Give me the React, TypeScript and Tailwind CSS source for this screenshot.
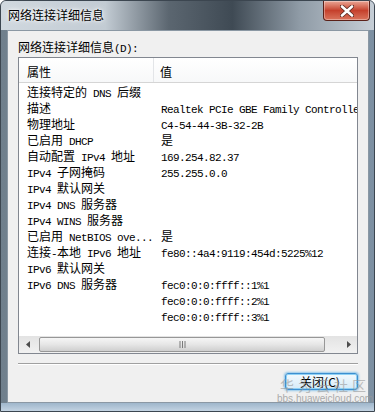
import React from "react";

const cjk = "font-['Noto_Sans_CJK_SC',sans-serif]";
const mono = "font-['Liberation_Mono','Noto_Sans_CJK_SC',monospace]";

// 中文用 12px，西文用等宽 6px 一个字
const Mixed: React.FC<{ text: string }> = ({ text }) => {
  const parts = text.split(/([\u3400-\u9fff]+)/).filter((p) => p !== "");
  return (
    <>
      {parts.map((p, i) =>
        /[\u3400-\u9fff]/.test(p) ? (
          <span key={i} className="text-[12px] leading-[16px]">
            {p}
          </span>
        ) : (
          <span key={i} className={`${mono} text-[11px] leading-[16px] tracking-[-0.6px]`}>
            {p}
          </span>
        )
      )}
    </>
  );
};

const rows: [string, string][] = [
  ["连接特定的 DNS 后缀", ""],
  ["描述", "Realtek PCIe GBE Family Controller"],
  ["物理地址", "C4-54-44-3B-32-2B"],
  ["已启用 DHCP", "是"],
  ["自动配置 IPv4 地址", "169.254.82.37"],
  ["IPv4 子网掩码", "255.255.0.0"],
  ["IPv4 默认网关", ""],
  ["IPv4 DNS 服务器", ""],
  ["IPv4 WINS 服务器", ""],
  ["已启用 NetBIOS ove...", "是"],
  ["连接-本地 IPv6 地址", "fe80::4a4:9119:454d:5225%12"],
  ["IPv6 默认网关", ""],
  ["IPv6 DNS 服务器", "fec0:0:0:ffff::1%1"],
  ["", "fec0:0:0:ffff::2%1"],
  ["", "fec0:0:0:ffff::3%1"],
];

const App: React.FC = () => {
  return (
    <div className={`${cjk} text-[12px] leading-[14px] w-[375px] h-[412px] flex flex-col relative overflow-hidden rounded-t-[6px] border border-[#3c4650] bg-gradient-to-r from-[#6f7f8c] via-[#9aa9b6] to-[#7d90a2]`}>
      {/* 标题栏 */}
      <div className="h-[29px] flex items-start justify-between pl-[7px] pr-[4px] bg-[linear-gradient(90deg,#d0d8df_0%,#c2cbd3_28%,#5b6670_45%,#3f4a54_62%,#8f9ba6_80%,#c6ced6_100%)]">
        <span className="mt-[7px] text-[12px] leading-[14px] text-black [text-shadow:0_0_6px_#ffffff,0_0_3px_#ffffff]">
          网络连接详细信息
        </span>
        <div className="w-[47px] h-[20px] flex items-center justify-center rounded-b-[4px] border border-t-0 border-[#5a2018] bg-gradient-to-b from-[#e9a595] via-[#c5402c] to-[#d9735c] shadow-[inset_0_0_0_1px_rgba(255,255,255,0.35)]">
          <svg width="14" height="12" viewBox="0 0 14 12">
            <path d="M2 1.5 L12 10.5 M12 1.5 L2 10.5" stroke="#5a2a22" strokeWidth="4.2" strokeLinecap="round" />
            <path d="M2 1.5 L12 10.5 M12 1.5 L2 10.5" stroke="#ffffff" strokeWidth="2.6" strokeLinecap="round" />
          </svg>
        </div>
      </div>

      {/* 客户区 */}
      <div className="flex-1 ml-[6px] mr-[5px] flex flex-col px-[10px] pt-[9px] bg-[#f0f0f0] border border-[#8b98a4]">
        <div className="h-[14px] leading-[14px] whitespace-pre text-black">
          <span className="text-[12px]">网络连接详细信息</span>
          <span className={`${mono} text-[11px] tracking-[-0.6px]`}>(D):</span>
        </div>

        {/* 列表 */}
        <div className="mt-[3px] h-[297px] flex flex-col bg-white border border-[#828790] text-black">
          <div className="h-[25px] flex border-b border-[#d5d5d5] bg-gradient-to-b from-white to-[#f7f8f9]">
            <div className="w-[135px] pl-[8px] pt-[7px] text-[12px] leading-[14px] border-r border-[#e3e5e8]">属性</div>
            <div className="flex-1 pl-[6px] pt-[7px] text-[12px] leading-[14px]">值</div>
          </div>
          <div className="flex-1 pt-px overflow-hidden">
            {rows.map(([k, v], i) => (
              <div key={i} className="h-[16px] flex whitespace-pre">
                <div className="w-[135px] h-[16px] leading-[16px] pl-[8px] overflow-hidden">
                  <Mixed text={k} />
                </div>
                <div className="flex-1 h-[16px] leading-[16px] pl-[7px] overflow-hidden">
                  <Mixed text={v} />
                </div>
              </div>
            ))}
          </div>

          {/* 水平滚动条 */}
          <div className="h-[17px] flex items-center bg-gradient-to-b from-[#e3e3e3] to-[#f1f1f1]">
            <div className="w-[17px] h-full flex items-center justify-center">
              <svg width="4" height="7" viewBox="0 0 4 7">
                <path d="M4 0 L0 3.5 L4 7 Z" fill="#4d4d4d" />
              </svg>
            </div>
            <div className="ml-[3px] w-[286px] h-[15px] flex items-center justify-center rounded-[2px] border border-[#979797] bg-gradient-to-b from-[#f6f6f6] via-[#e6e6e6] to-[#cfcfcf]">
              <svg width="7" height="7" viewBox="0 0 7 7">
                <path d="M1 0 V7 M3.5 0 V7 M6 0 V7" stroke="#7a7a7a" strokeWidth="1" />
              </svg>
            </div>
            <div className="flex-1 h-full flex items-center justify-end pr-[6px]">
              <svg width="4" height="7" viewBox="0 0 4 7">
                <path d="M0 0 L4 3.5 L0 7 Z" fill="#4d4d4d" />
              </svg>
            </div>
          </div>
        </div>

        {/* 分隔线 */}
        <div className="mt-[9px] border-t border-[#a0a0a0] border-b border-b-white" />

        <div className="mt-[8px] flex justify-end">
          <div className="w-[73px] h-[17px] flex items-center justify-center pr-[3px] text-[12px] leading-[14px] text-black rounded-[3px] border border-[#3c8fd0] bg-gradient-to-b from-[#f2f9fd] to-[#d6ebf8] shadow-[0_0_2px_1px_rgba(80,170,230,0.6),inset_0_0_0_1px_#8fd1f5]">
            关闭(C)
          </div>
        </div>
      </div>

      {/* 底边框 */}
      <div className="h-[8px] bg-gradient-to-b from-[#9fb6cb] to-[#c3d3e2]" />

      {/* 水印 */}
      <div className="absolute left-[276px] top-[377px] flex flex-col items-center pointer-events-none">
        <span className="text-[14px] leading-[15px] tracking-[4px] text-[#9a9a9a] opacity-60">华为云社区</span>
        <span className="font-['Liberation_Sans',sans-serif] text-[10px] leading-[12px] text-[#9a9a9a] opacity-80">
          bbs.huaweicloud.com
        </span>
      </div>
    </div>
  );
};

export default App;
